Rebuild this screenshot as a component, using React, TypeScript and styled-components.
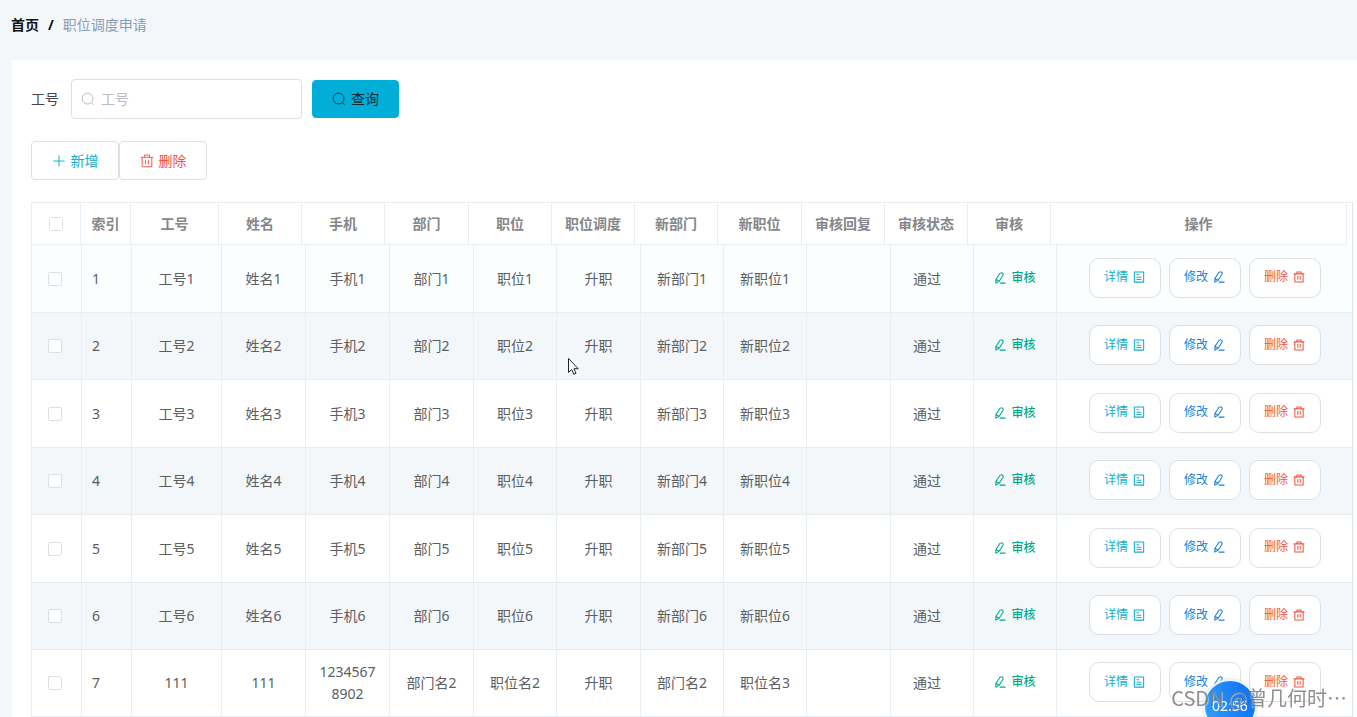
import React from "react";
import styled, { createGlobalStyle } from "styled-components";

const GlobalStyle = createGlobalStyle`
  *, *::before, *::after { box-sizing: border-box; }
  body {
    margin: 0;
    background: #f3f7fa;
    color: #5c5e60;
    font: 14px/22px "Noto Sans", "Noto Sans CJK SC", sans-serif;
  }
  button, input { font: inherit; }
`;

type IconName = "search" | "plus" | "trash" | "edit" | "document";

const iconShapes: Record<IconName, React.ReactNode> = {
  search: (
    <>
      <circle cx="7.5" cy="7.5" r="6.2" />
      <path d="M12 12.2 14.4 14.6" />
    </>
  ),
  plus: <path d="M8 1.6v12.8M1.6 8h12.8" />,
  trash: (
    <path d="M.8 3.8h14.4M5.2 3.8V1.2h5.6v2.6M2.5 3.8v10.8h11V3.8M6.4 6.6v5.2M9.6 6.6v5.2" />
  ),
  edit: (
    <path d="M9.3 1.2Q10.6.8 11.9 2.2 12.6 3.2 12 4.2L6.9 12.3 2.4 14.8 2.5 9.9L7.8 1.9Q8.5 1.2 9.3 1.2ZM2.8 10 6.8 12.2M7.6 14.8H15.4" />
  ),
  document: (
    <path d="M1.8 1.2h12.4v13.6H1.8ZM4.8 5h3.4M4.8 8.2h6.4M4.8 11.4h6.4" />
  ),
};

const Svg = styled.svg<{ $size: number }>`
  width: ${(p) => p.$size}px;
  height: ${(p) => p.$size}px;
  flex: none;
  fill: none;
  stroke: currentColor;
  stroke-width: ${(p) => (p.$size > 12 ? 1.1 : 1.4)};
  stroke-linejoin: round;
`;

const Icon = ({ name, size = 12 }: { name: IconName; size?: number }) => (
  <Svg $size={size} viewBox="0 0 16 16" aria-hidden="true">
    {iconShapes[name]}
  </Svg>
);

const Breadcrumb = styled.nav`
  display: flex;
  align-items: center;
  gap: 9px;
  height: 60px;
  padding: 0 11px 10px;
  color: #8a9bb5;
`;

const HomeLink = styled.a`
  color: #111;
  font-weight: bold;
  text-decoration: none;
`;

const Separator = styled.span`
  color: #111;
  font-weight: bold;
`;

const Card = styled.main`
  margin-left: 12px;
  padding: 19px 4px 0 19px;
  background: #fff;
`;

const SearchForm = styled.form`
  display: flex;
  align-items: center;
  margin-bottom: 22px;
`;

const Label = styled.label`
  margin-right: 12px;
  color: #444;
`;

const InputBox = styled.div`
  display: flex;
  align-items: center;
  gap: 6px;
  width: 231px;
  height: 40px;
  margin-right: 10px;
  padding: 0 9px;
  border: 1px solid #dcdfe6;
  border-radius: 4px;
  color: #b4b8c0;
`;

const TextInput = styled.input`
  flex: 1;
  min-width: 0;
  padding: 0;
  border: 0;
  outline: 0;
  background: none;
  color: #606266;
  &::placeholder { color: #b9bcc4; }
`;

const ToolButton = styled.button<{ $color: string; $filled?: boolean }>`
  display: flex;
  align-items: center;
  justify-content: center;
  gap: 5px;
  width: ${(p) => (p.$filled ? 87 : 88)}px;
  height: ${(p) => (p.$filled ? 38 : 39)}px;
  padding: 0;
  border: 1px solid ${(p) => (p.$filled ? "#00aed8" : "#dcdfe6")};
  border-radius: 4px;
  background: ${(p) => (p.$filled ? "#00aed8" : "#fff")};
  color: ${(p) => p.$color};
  cursor: pointer;
`;

const Toolbar = styled.div`
  display: flex;
  margin-bottom: 22px;
`;

const TableFrame = styled.div`
  border: 1px solid #ebeef0;
  border-right-color: #dfe6ee;
  border-bottom: 0;
`;

const HeadWrap = styled.div`
  padding-right: 5px;
`;

const Grid = styled.table`
  width: 100%;
  table-layout: fixed;
  border-collapse: separate;
  border-spacing: 0;
`;

const HeadCell = styled.th`
  height: 42px;
  padding: 0;
  border-right: 1px solid #ebeef0;
  border-bottom: 1px solid #ebeef0;
  color: #85878a;
  text-align: center;
  font-weight: bold;
`;

const Cell = styled.td<{ $left?: boolean }>`
  padding: 0 10px;
  border-right: 1px solid #e9eef0;
  border-bottom: 1px solid #e6ecf0;
  text-align: ${(p) => (p.$left ? "left" : "center")};
  word-break: break-all;
  &:last-child { border-right: 0; }
`;

const CheckCell = styled(Cell)`
  padding: 0 14px 0 10px;
`;

const Row = styled.tr`
  height: 67px;
  &:nth-child(-2n + 5) { height: 68px; }
  &:first-child { background: #fbfefe; }
  &:nth-child(even) { background: #f3f7fa; }
`;

const Check = styled.input`
  appearance: none;
  display: block;
  width: 14px;
  height: 14px;
  margin: 0 auto;
  border: 1px solid #dcdfe6;
  border-radius: 2px;
  background: #fff;
`;

const Status = styled.span`
  margin-right: 10px;
`;

const AuditButton = styled.button`
  display: inline-flex;
  align-items: center;
  gap: 5px;
  padding: 0 0 2px;
  border: 0;
  background: none;
  color: #00a98a;
  font-size: 12px;
  font-weight: 500;
  line-height: 22px;
  white-space: nowrap;
  cursor: pointer;
`;

const Actions = styled.div`
  display: flex;
  justify-content: center;
  gap: 8px;
  margin-bottom: 2px;
`;

const ActionButton = styled.button<{ $color: string }>`
  display: flex;
  align-items: center;
  justify-content: center;
  gap: 5px;
  width: 72px;
  height: 40px;
  padding: 0 0 1px;
  border: 1px solid #dcdfe3;
  border-radius: 10px;
  background: #fff;
  color: ${(p) => p.$color};
  font-size: 12px;
  cursor: pointer;
`;

const Timer = styled.div`
  position: fixed;
  right: 100px;
  bottom: -16px;
  display: flex;
  align-items: center;
  justify-content: center;
  width: 54px;
  height: 54px;
  border: 2px solid #eef6fd;
  border-radius: 50%;
  background: linear-gradient(75deg, #35a0fb, #0a6cf5);
  box-shadow: 0 0 2px #b5c0cc;
  color: #fff;
`;

const Watermark = styled.div`
  position: fixed;
  right: 10px;
  bottom: 5px;
  color: rgba(120, 122, 126, 0.85);
  font: 20px/28px "Noto Sans CJK SC", sans-serif;
  text-shadow: 1px 1px 0 rgba(255, 255, 255, 0.4);
  white-space: nowrap;
`;

const Pointer = styled.svg`
  position: fixed;
  left: 567px;
  top: 357px;
  width: 13px;
  height: 19px;
`;

const headings = [
  "索引", "工号", "姓名", "手机", "部门", "职位", "职位调度",
  "新部门", "新职位", "审核回复", "审核状态", "审核", "操作",
];

const headWidths = [49, 50, 88, 83, 83, 84, 83, 83, 83, 84, 83, 83, 83, 296];
const bodyWidths = [50, 50, 90, 84, 84, 84, 83, 84, 83, 83, 84, 83, 83, 295];

const numbered = [1, 2, 3, 4, 5, 6].map((n) => [
  `工号${n}`, `姓名${n}`, `手机${n}`, `部门${n}`, `职位${n}`,
  "升职", `新部门${n}`, `新职位${n}`, "",
]);

const rows = [
  ...numbered,
  ["111", "111", "12345678902", "部门名2", "职位名2", "升职", "部门名2", "职位名3", ""],
];

const Columns = ({ widths }: { widths: number[] }) => (
  <colgroup>
    {widths.map((w, i) => (
      <col key={i} width={w} />
    ))}
  </colgroup>
);

export default function App() {
  return (
    <>
      <GlobalStyle />
      <Breadcrumb aria-label="breadcrumb">
        <HomeLink href="#">首页</HomeLink>
        <Separator>/</Separator>
        <span>职位调度申请</span>
      </Breadcrumb>
      <Card>
        <SearchForm onSubmit={(e) => e.preventDefault()}>
          <Label htmlFor="job-number">工号</Label>
          <InputBox>
            <Icon name="search" size={14} />
            <TextInput id="job-number" type="text" placeholder="工号" />
          </InputBox>
          <ToolButton type="submit" $color="#0b2a35" $filled>
            <Icon name="search" size={14} />
            查询
          </ToolButton>
        </SearchForm>
        <Toolbar>
          <ToolButton type="button" $color="#12aecb">
            <Icon name="plus" size={14} />
            新增
          </ToolButton>
          <ToolButton type="button" $color="#f2553f">
            <Icon name="trash" size={14} />
            删除
          </ToolButton>
        </Toolbar>
        <TableFrame>
          <HeadWrap>
            <Grid>
              <Columns widths={headWidths} />
              <thead>
                <tr>
                  <HeadCell scope="col">
                    <Check type="checkbox" aria-label="全选" />
                  </HeadCell>
                  {headings.map((h) => (
                    <HeadCell key={h} scope="col">{h}</HeadCell>
                  ))}
                </tr>
              </thead>
            </Grid>
          </HeadWrap>
          <Grid>
            <Columns widths={bodyWidths} />
            <tbody>
              {rows.map((cells, i) => (
                <Row key={i}>
                  <CheckCell>
                    <Check type="checkbox" aria-label={`选择 ${i + 1}`} />
                  </CheckCell>
                  <Cell $left>{i + 1}</Cell>
                  {cells.map((text, c) => (
                    <Cell key={c}>{text}</Cell>
                  ))}
                  <Cell>
                    <Status>通过</Status>
                  </Cell>
                  <Cell>
                    <AuditButton type="button">
                      <Icon name="edit" />
                      审核
                    </AuditButton>
                  </Cell>
                  <Cell>
                    <Actions>
                      <ActionButton type="button" $color="#12aecb">
                        详情
                        <Icon name="document" />
                      </ActionButton>
                      <ActionButton type="button" $color="#1b7fd6">
                        修改
                        <Icon name="edit" />
                      </ActionButton>
                      <ActionButton type="button" $color="#f2553f">
                        删除
                        <Icon name="trash" />
                      </ActionButton>
                    </Actions>
                  </Cell>
                </Row>
              ))}
            </tbody>
          </Grid>
        </TableFrame>
      </Card>
      <Timer>02:56</Timer>
      <Watermark>CSDN @曾几何时…</Watermark>
      <Pointer viewBox="0 0 13 19" aria-hidden="true">
        <path
          d="M1.5 1.5v14l3.2-3 2.1 4.8 2.2-1-2.1-4.6h4.3z"
          fill="#fff"
          stroke="#222"
        />
      </Pointer>
    </>
  );
}
